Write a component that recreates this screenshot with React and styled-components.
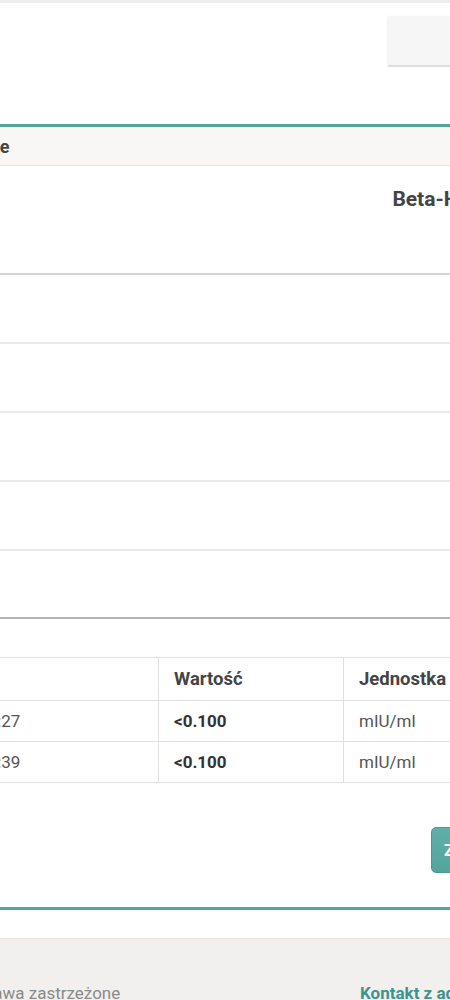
import React from 'react';
import styled, { createGlobalStyle } from 'styled-components';

const TEAL = '#53a49c';

const Global = createGlobalStyle`
  html, body { margin: 0; padding: 0; background: #ffffff; overflow: hidden; }
  body { font-family: Roboto, "Liberation Sans", Arial, sans-serif; color: #444444; }
`;

/* the page is wider than the window and scrolled sideways */
const Viewport = styled.div`
  width: 100%;
  overflow: hidden;
`;

const Canvas = styled.div`
  width: 1279px;
  margin-left: -200px;
`;

const TopRule = styled.div`
  height: 3px;
  background: #eeeeee;
`;

const Toolbar = styled.div`
  height: 121px;
  box-sizing: border-box;
  padding-top: 13px;
  display: flex;
  justify-content: center;
`;

const FilterCard = styled.div`
  width: 103px;
  height: 49px;
  background: #f6f6f6;
  box-shadow: 0 2px 1px rgba(0, 0, 0, 0.12), -1px 0 2px rgba(0, 0, 0, 0.04);
`;

const Panel = styled.section`
  border-top: 3px solid ${TEAL};
  border-bottom: 3px solid ${TEAL};
  background: #ffffff;
`;

const PanelHeader = styled.div`
  height: 38px;
  display: grid;
  grid-template-columns: 120px 1fr;
  align-items: center;
  padding-left: 24px;
  background: #f8f7f5;
  border-bottom: 1px solid #e4e3e1;
  font-size: 18px;
  font-weight: 700;
  color: #444444;
`;

const TitleRow = styled.div`
  height: 109px;
  box-sizing: border-box;
  padding-top: 21px;
  text-align: center;
  border-bottom: 2px solid #d4d4d4;
`;

const Title = styled.h2`
  margin: 0;
  font-size: 21px;
  line-height: 1.2;
  font-weight: 700;
  color: #444444;
`;

const DetailRow = styled.div`
  height: ${(p) => p.$h}px;
  display: flex;
  align-items: center;
  padding-left: 24px;
  border-bottom: 2px solid ${(p) => (p.$last ? '#b4b4b4' : '#e9e9e9')};
  font-size: 17px;
  color: #666666;
`;

const TableWrap = styled.div`
  padding: 38px 24px 0;
`;

const Table = styled.table`
  border-collapse: collapse;
  table-layout: fixed;
  width: 1231px;
  font-size: 17px;
`;

const Th = styled.th`
  height: 42px;
  padding: 0 15px;
  text-align: left;
  font-size: 18.5px;
  font-weight: 700;
  color: #444444;
  border: 1px solid #e0e0e0;
  white-space: nowrap;
  overflow: hidden;
`;

const Td = styled.td`
  height: 40px;
  padding: 0 15px;
  text-align: left;
  font-weight: ${(p) => (p.$strong ? 700 : 400)};
  color: ${(p) => (p.$strong ? '#333333' : '#555555')};
  border: 1px solid #e0e0e0;
  white-space: nowrap;
  overflow: hidden;
`;

const ActionRow = styled.div`
  display: flex;
  padding: 44px 0 34px 631px;
`;

const PrimaryButton = styled.button`
  height: 46px;
  padding: 0 12px;
  border: 1px solid #4b9a93;
  border-radius: 5px;
  background: linear-gradient(#5fafa8, #55a39c);
  color: #ffffff;
  font-family: inherit;
  font-size: 17px;
  font-weight: 700;
`;

const Footer = styled.footer`
  margin-top: 28px;
  height: 90px;
  box-sizing: border-box;
  padding: 43px 0 0 107px;
  display: grid;
  grid-template-columns: 453px auto;
  background: #f1f0ee;
  box-shadow: inset 0 2px 2px -1px rgba(0, 0, 0, 0.05);
  font-size: 17px;
  line-height: 1.5;
`;

const Copy = styled.span`
  color: #8a8a8a;
  white-space: nowrap;
`;

const FooterLink = styled.a`
  color: #3d948e;
  font-weight: 700;
  text-decoration: none;
  white-space: nowrap;
`;

const details = ['Pacjent', 'PESEL', 'Wiek', 'Płeć', 'Lekarz'];

const results = [
  { date: '2023-10-12 08:27', value: '<0.100', unit: 'mIU/ml', range: '0 - 5' },
  { date: '2023-10-12 14:39', value: '<0.100', unit: 'mIU/ml', range: '0 - 5' },
];

export default function App() {
  return (
    <Viewport>
      <Global />
      <Canvas>
        <TopRule />
        <Toolbar>
          <FilterCard />
        </Toolbar>
        <Panel>
          <PanelHeader>
            <span>Kod</span>
            <span>Badanie</span>
          </PanelHeader>
          <TitleRow>
            <Title>Beta-HCG</Title>
          </TitleRow>
          {details.map((d, i) => (
            <DetailRow key={d} $h={i === details.length - 1 ? 66 : 67} $last={i === details.length - 1}>
              {d}
            </DetailRow>
          ))}
          <TableWrap>
            <Table>
              <colgroup>
                <col style={{ width: 48 }} />
                <col style={{ width: 286 }} />
                <col style={{ width: 185 }} />
                <col style={{ width: 150 }} />
                <col />
              </colgroup>
              <thead>
                <tr>
                  <Th>Lp.</Th>
                  <Th>Data</Th>
                  <Th>Wartość</Th>
                  <Th>Jednostka</Th>
                  <Th>Norma</Th>
                </tr>
              </thead>
              <tbody>
                {results.map((r, i) => (
                  <tr key={r.date}>
                    <Td>{i + 1}</Td>
                    <Td>{r.date}</Td>
                    <Td $strong>{r.value}</Td>
                    <Td>{r.unit}</Td>
                    <Td>{r.range}</Td>
                  </tr>
                ))}
              </tbody>
            </Table>
          </TableWrap>
          <ActionRow>
            <PrimaryButton type="button">Zamknij</PrimaryButton>
          </ActionRow>
        </Panel>
        <Footer>
          <Copy>Wszelkie prawa zastrzeżone</Copy>
          <FooterLink href="#">Kontakt z administratorem</FooterLink>
        </Footer>
      </Canvas>
    </Viewport>
  );
}
